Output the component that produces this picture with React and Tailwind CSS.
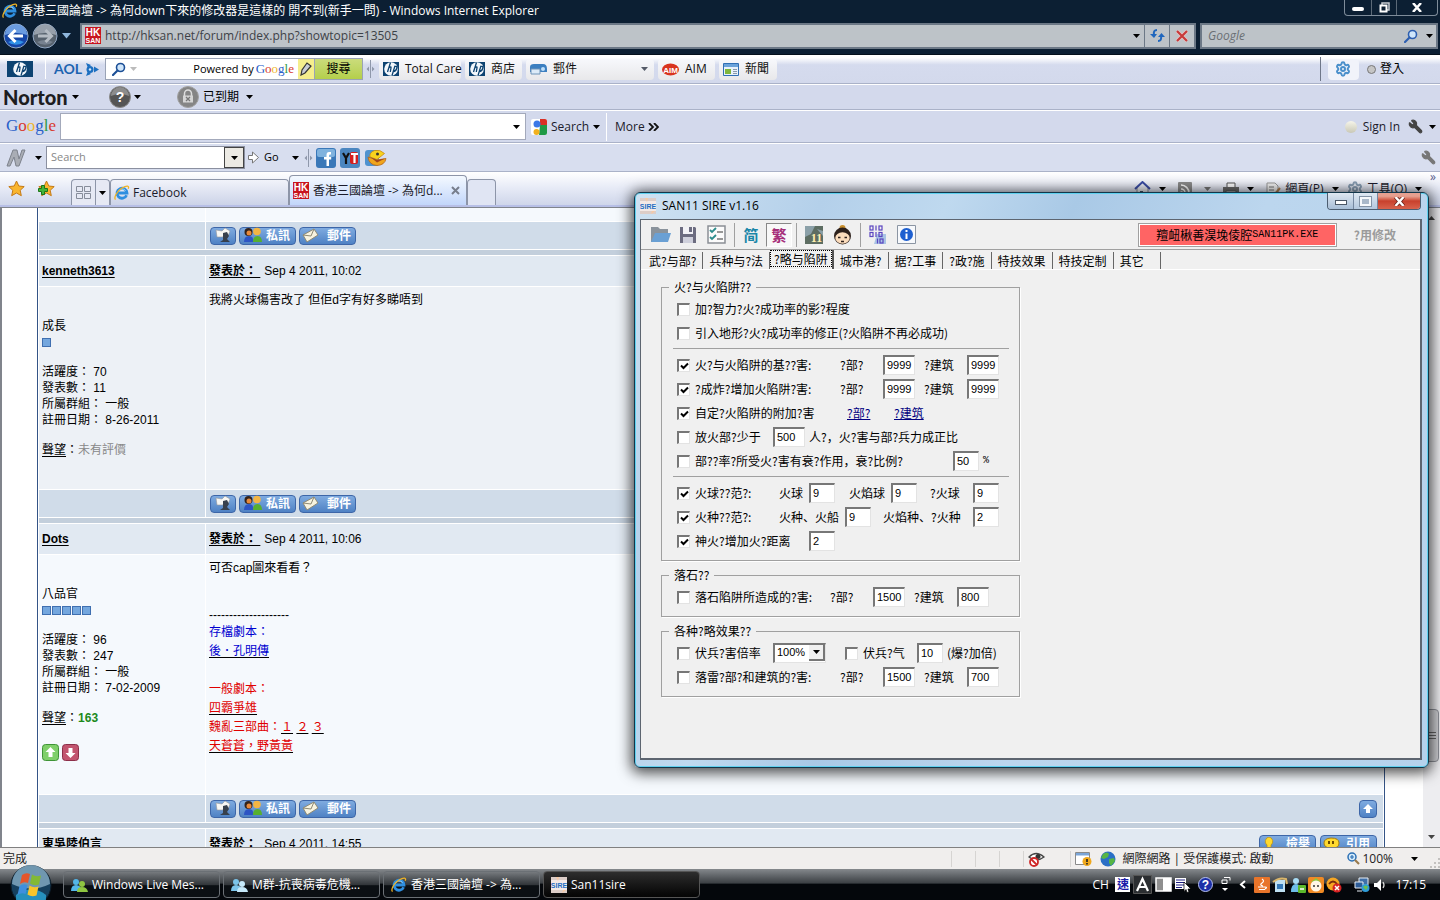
import React from 'react';
import { Wrench, Settings } from 'lucide-react';

/* ---------- small shared drawings ---------- */

const Caret = ({ className = 'text-black' }) => (
  <svg width="7" height="4" viewBox="0 0 7 4" className={`shrink-0 ${className}`}>
    <path d="M0 0h7L3.5 4z" fill="currentColor" />
  </svg>
);

const IeLogo = ({ size = 16 }) => (
  <svg width={size} height={size} viewBox="0 0 16 16" className="shrink-0">
    <path d="M12.6 10.2A5 5 0 1 1 13 8H4" fill="none" stroke="#2f8fe0" strokeWidth="2.8" />
    <path d="M4.2 6.6a4.3 4.3 0 0 1 7.4-1" fill="none" stroke="#9ad4fa" strokeWidth="1" />
    <path d="M1.6 14.6C-.6 12.8 3 6 8 3s7.6-2.4 6.2.8" fill="none" stroke="#f0b323" strokeWidth="1.3" />
  </svg>
);

const HkIcon = () => (
  <svg width="16" height="17" viewBox="0 0 16 17" className="shrink-0">
    <rect width="16" height="17" fill="#c8141e" />
    <g fill="#fff" fontFamily="Liberation Sans, sans-serif" fontWeight="bold" textAnchor="middle">
      <text x="8" y="8.5" fontSize="10">HK</text>
      <text x="8" y="16" fontSize="7">SAN</text>
    </g>
  </svg>
);

const HpIcon = ({ wide }) => (
  <svg width={wide ? 26 : 16} height={wide ? 16 : 14} viewBox={wide ? '0 0 26 16' : '5 1 16 14'} className="shrink-0">
    <rect width="26" height="16" fill="#0d4371" />
    <circle cx="13" cy="8" r="6.8" fill="#f4f8fc" />
    <path d="M12.5 1.5 9.5 11M11 6.5q2.500-1.500 2 .500L12.300 11M17 4.800 14 14.500M16.500 5.500q3-.800 2.200 2t-3.400 3" fill="none" stroke="#0d4371" strokeWidth="1.3" />
  </svg>
);

const SireIcon = () => (
  <svg width="16" height="16" viewBox="0 0 16 16" className="shrink-0">
    <rect width="16" height="16" fill="#f3e9e6" />
    <path d="M0 0h16v3H0zM0 13h16v3H0z" fill="#dccdc8" />
    <path d="M5 0h3l-1 4zM11 16l1-3h3z" fill="#f6c9a4" />
    <text x="8" y="10.5" fontSize="7" fontWeight="bold" textAnchor="middle" fill="#1d6fc4" fontFamily="Liberation Sans, sans-serif">SIRE</text>
  </svg>
);

const GoogleWord = ({ className }) => (
  <span className={`font-['Liberation_Serif',serif] ${className}`}>
    <span className="text-[#2a5fc9]">G</span>
    <span className="text-[#d8392f]">o</span>
    <span className="text-[#efb52b]">o</span>
    <span className="text-[#2a5fc9]">g</span>
    <span className="text-[#2f9a48]">l</span>
    <span className="text-[#d8392f]">e</span>
  </span>
);

const Magnifier = ({ color = '#2d5fb0' }) => (
  <svg width="14" height="14" viewBox="0 0 14 14" className="shrink-0">
    <circle cx="8.5" cy="5.5" r="4" fill="#cfe6fb" stroke={color} strokeWidth="1.6" />
    <path d="M5.5 8.5 1 13" stroke={color} strokeWidth="2.2" strokeLinecap="round" />
  </svg>
);

const Grip = () => (
  <svg width="9" height="20" viewBox="0 0 9 20" className="shrink-0">
    <path d="M4.5 1v18" stroke="#8f98ab" />
    <path d="M3 7.5v5L.5 10zM6 7.5v5L8.5 10z" fill="#8f98ab" />
  </svg>
);

const Divider = ({ className = 'h-5' }) => <span className={`w-px shrink-0 border-r border-white bg-[#a7b0c6] ${className}`} />;

/* ---------- browser frame ---------- */

function TitleBar() {
  return (
    <header className="flex h-[21px] shrink-0 items-center bg-[#0c1f33] pl-0.5">
      <IeLogo />
      <h1 className="ml-[3px] text-xs whitespace-nowrap text-white">香港三國論壇 -&gt; 為何down下來的修改器是這樣的 開不到(新手一問) - Windows Internet Explorer</h1>
      <div className="mr-0.5 ml-auto flex h-4 self-start rounded-b border border-t-0 border-[#7f8c9a]">
        <button aria-label="最小化" className="flex w-[26px] items-end justify-center pb-1">
          <span className="h-1 w-3 rounded-sm bg-white" />
        </button>
        <button aria-label="還原" className="flex w-[26px] items-center justify-center border-x border-[#5c6977]">
          <svg width="11" height="11" viewBox="0 0 11 11">
            <path d="M3 1h7v7H3z" fill="none" stroke="#c9ced4" strokeWidth="1.5" />
            <path d="M1.500 3.500h6v6h-6z" fill="#0c1f33" stroke="#fff" strokeWidth="2" />
          </svg>
        </button>
        <button aria-label="關閉" className="flex w-10 items-center justify-center">
          <svg width="10" height="9" viewBox="0 0 10 9">
            <path d="M1 0l8 9M9 0L1 9" stroke="#fff" strokeWidth="2.5" />
          </svg>
        </button>
      </div>
    </header>
  );
}

function NavButton({ forward }) {
  return (
    <button aria-label={forward ? '下一頁' : '上一頁'} className="shrink-0">
      <svg width="26" height="26" viewBox="0 0 26 26">
        <circle cx="13" cy="13" r="12" fill={forward ? '#57626e' : '#1546a8'} stroke="#93a9c6" />
        <path d="M2 12a11 11 0 0 1 22 0q-11-4-22 0z" fill={forward ? '#a7b0ba' : '#7fb0ee'} opacity=".8" />
        <path d="M5 19a11 9 0 0 0 16 0q-8-4-16 0z" fill={forward ? '#7f8b98' : '#37a4f6'} opacity=".8" />
        <path
          d={forward ? 'M6 13h13M13.500 7l6 6-6 6' : 'M20 13H7M12.500 7l-6 6 6 6'}
          fill="none"
          stroke={forward ? '#b4bbc3' : '#fff'}
          strokeWidth="3"
        />
      </svg>
    </button>
  );
}

function NavBar() {
  return (
    <nav className="flex h-[34px] shrink-0 items-center border-b border-[#05101c] bg-[#0c1f33] pr-0.5 pb-1 pl-[3px]">
      <NavButton />
      <span className="w-[3px]" />
      <NavButton forward />
      <span className="ml-1 text-[#8fb6dc]">
        <svg width="9" height="6" viewBox="0 0 9 6"><path d="M0 0h9L4.500 5.500z" fill="currentColor" /></svg>
      </span>
      <div className="ml-[9px] flex h-[26px] min-w-0 flex-1 items-center border-2 border-[#6c7886] bg-[#bdc3c8] pl-[3px]">
        <HkIcon />
        <input aria-label="網址" defaultValue="http://hksan.net/forum/index.php?showtopic=13505" className="ml-1 min-w-0 flex-1 bg-transparent text-xs text-[#3d4247] outline-none" />
        <Caret />
        <button aria-label="重新整理" className="ml-1 flex h-full w-[25px] items-center justify-center border-l border-[#6c7886]">
          <svg width="15" height="13" viewBox="0 0 15 13">
            <path d="M7 1q-4 0-3 5M8 12q4 0 3-5" fill="none" stroke="#1f66bd" strokeWidth="2" />
            <path d="M0 5h7L4 9zM8 8h7l-3.500-4z" fill="#1f66bd" />
          </svg>
        </button>
        <button aria-label="停止" className="flex h-full w-[25px] items-center justify-center border-l border-[#6c7886]">
          <svg width="12" height="12" viewBox="0 0 12 12">
            <path d="M1 1l10 10M11 1L1 11" stroke="#e8c8c8" strokeWidth="3.5" />
            <path d="M1 1l10 10M11 1L1 11" stroke="#c73a3a" strokeWidth="2.2" />
          </svg>
        </button>
      </div>
      <div className="ml-1 flex h-[26px] w-[238px] items-center border-2 border-[#6c7886] bg-[#bdc3c8] pr-[3px] pl-1.5">
        <input aria-label="搜尋" placeholder="Google" className="min-w-0 flex-1 bg-transparent text-xs italic outline-none placeholder:text-[#6a6f74]" />
        <Magnifier />
        <span className="w-2" />
        <Caret />
      </div>
    </nav>
  );
}

const chip = 'flex h-[21px] shrink-0 items-center rounded-sm bg-gradient-to-b from-[#f7f8fc] to-[#e8e8ea] pl-1 whitespace-nowrap text-[#111]';

function HpBar() {
  return (
    <div className="flex h-[29px] shrink-0 items-center border-b border-[#aab2c8] bg-gradient-to-b from-white from-10% via-[#d5dbee] via-35% to-[#d3d9ec] text-xs">
      <span className="ml-[7px]"><HpIcon wide /></span>
      <span className="w-3" />
      <Divider />
      <span className="ml-2 w-[31px] font-['Lato',sans-serif] text-[14px] font-bold text-[#1c63b0]">AOL</span>
      <svg width="14" height="13" viewBox="0 0 14 13" className="shrink-0">
        <circle cx="5" cy="6.5" r="3.5" fill="#1c6fc0" />
        <circle cx="5" cy="6.5" r="1.2" fill="#d3e6f8" />
        <path d="M1 0l5 2-3 3zM1 13l5-2-3-3zM9 3.500l5 3-5 3z" fill="#1c6fc0" />
      </svg>
      <div className="ml-1.5 flex h-[22px] w-[258px] shrink-0 border border-[#9aa3b6] bg-white">
        <div className="flex min-w-0 flex-1 items-center pl-1.5">
          <Magnifier color="#1c4f96" />
          <span className="w-1" />
          <Caret className="text-[#bbb]" />
          <input id="hpq" className="min-w-0 flex-1 outline-none" />
          <label htmlFor="hpq" className="mr-0.5 text-[11px] whitespace-nowrap text-black">Powered by</label>
          <GoogleWord className="text-[13px]" />
          <span className="ml-1 flex h-full w-4 items-center justify-center bg-[#f5ee8c]">
            <svg width="12" height="14" viewBox="0 0 12 14">
              <path d="M1 13l1-5 5-7 4 3-6 7z" fill="#c9cdd4" stroke="#333" strokeWidth="1.2" />
            </svg>
          </span>
        </div>
        <button className="w-12 border-l border-[#9aa3b6] bg-gradient-to-b from-[#cbdc7b] to-[#b4cf4a]">搜尋</button>
      </div>
      <span className="ml-[3px]"><Grip /></span>
      <div className="ml-1 flex gap-1">
        <button className={`${chip} w-[82px] gap-1.5`}><HpIcon />Total Care</button>
        <button className={`${chip} w-[57px] gap-1.5`}><HpIcon />商店</button>
        <button className={`${chip} w-[128px] gap-1.5 pr-1.5`}>
          <svg width="17" height="13" viewBox="0 0 17 13">
            <path d="M0 4q0-3 4-3h9q4 0 4 5v3H0z" fill="#3c7fc0" />
            <path d="M1 6h9v5H1z" fill="#dcebf8" stroke="#6f94b8" />
            <circle cx="13" cy="6" r="2" fill="#bfe0fa" />
          </svg>
          郵件
          <span className="ml-auto"><Caret className="text-[#555b68]" /></span>
        </button>
        <button className={`${chip} w-[57px] gap-1.5`}>
          <svg width="17" height="13" viewBox="0 0 17 13" className="shrink-0">
            <ellipse cx="8.5" cy="6.5" rx="8.5" ry="6" fill="#d9341f" />
            <text x="8.5" y="9.5" fontSize="8" fontWeight="bold" fill="#fff" textAnchor="middle" fontFamily="Liberation Sans, sans-serif">AIM</text>
          </svg>
          AIM
        </button>
        <button className={`${chip} w-[58px] gap-1.5`}>
          <svg width="16" height="13" viewBox="0 0 16 13">
            <path d="M.5.5h15v12H.5z" fill="#e8f2fb" stroke="#2f6fb4" />
            <path d="M1 1h14v3H1z" fill="#6ba3da" />
            <path d="M2 6h6v5H2z" fill="#7fb63c" />
            <path d="M10 6.5h4M10 8.5h4M10 10.5h4" stroke="#8a99aa" />
          </svg>
          新聞
        </button>
      </div>
      <span className="ml-auto h-6 w-px bg-[#6f7789]" />
      <button aria-label="設定" className="ml-[7px] flex h-[21px] w-[31px] items-center justify-center rounded-sm bg-[#f1f3fa]">
        <Settings size={16} strokeWidth={3} color="#4a8fcb" />
      </button>
      <span className="ml-2 h-[9px] w-[9px] rounded-full border border-[#777] bg-[#c5c5c5]" />
      <button className="mr-9 ml-1">登入</button>
    </div>
  );
}

function NortonBar() {
  return (
    <div className="flex h-[26px] shrink-0 items-center border-t border-b border-t-white border-b-[#aab2c8] bg-[#d3d9ec] text-xs">
      <span className="ml-[3px] w-[69px] font-['Lato',sans-serif] text-[20px] leading-6 font-black text-[#1d1d1f]">Norton</span>
      <Caret />
      <svg width="22" height="22" viewBox="0 0 22 22" className="ml-[30px]">
        <circle cx="11" cy="11" r="10.5" fill="#555" stroke="#8a8a8a" />
        <path d="M2 10a9 9 0 0 1 18 0q-9-4-18 0z" fill="#8c8c8c" />
        <text x="11" y="16" fontSize="14" fontWeight="bold" fill="#fff" textAnchor="middle" fontFamily="Liberation Sans, sans-serif">?</text>
      </svg>
      <span className="w-[3px]" />
      <Caret />
      <svg width="22" height="22" viewBox="0 0 22 22" className="ml-9">
        <circle cx="11" cy="11" r="10.5" fill="#858585" stroke="#a2a2a2" />
        <path d="M7.500 10V7.500a3.500 3.500 0 0 1 7 0V10" fill="none" stroke="#ddd" strokeWidth="1.5" />
        <path d="M6 9.500h10v7H6z" fill="#d5d5d5" />
        <path d="M9 11l4 4M13 11l-4 4" stroke="#777" strokeWidth="1.3" />
      </svg>
      <span className="mr-[7px] ml-1">已到期</span>
      <Caret />
    </div>
  );
}

function GoogleBar() {
  return (
    <div className="flex h-[33px] shrink-0 items-center border-t border-b border-t-white border-b-[#aab2c8] bg-[#d3d9ec] text-xs text-[#1b1b2b]">
      <GoogleWord className="ml-1.5 w-[54px] text-[17px]" />
      <div className="flex h-[27px] w-[466px] items-center border border-[#a3a9bb] bg-white pr-[5px]">
        <input aria-label="Google search" className="h-full min-w-0 flex-1 outline-none" />
        <Caret />
      </div>
      <button className="ml-[5px] flex items-center gap-1">
        <svg width="16" height="16" viewBox="0 0 16 16">
          <rect width="16" height="16" rx="2" fill="#fff" />
          <path d="M9 0h5a2 2 0 0 1 2 2v5H9z" fill="#d93025" />
          <path d="M9 6h7v8a2 2 0 0 1-2 2H8z" fill="#1f9a46" />
          <circle cx="6" cy="5" r="3.5" fill="#3b78e7" />
          <circle cx="5.5" cy="13" r="3" fill="#f2b01e" />
        </svg>
        Search
        <Caret />
      </button>
      <span className="w-1.5" />
      <Divider className="h-7" />
      <button className="ml-2 flex items-center gap-[3px]">
        More
        <svg width="11" height="8" viewBox="0 0 11 8">
          <path d="M1 0l4 4-4 4M6 0l4 4-4 4" fill="none" stroke="#111" strokeWidth="1.8" />
        </svg>
      </button>
      <span className="ml-auto h-3 w-3 rounded-full bg-gradient-to-b from-[#f6f5ea] to-[#c9c8b6]" />
      <button className="ml-1.5">Sign In</button>
      <Wrench size={15} fill="#444" color="#444" className="ml-2 -scale-x-100" />
      <span className="w-1.5" />
      <span className="mr-1"><Caret /></span>
    </div>
  );
}

function LinksBar() {
  return (
    <div className="flex h-[29px] shrink-0 items-center border-t border-b border-t-white border-b-[#aab2c8] bg-[#d8deef] text-[11px]">
      <svg width="20" height="18" viewBox="0 0 20 18" className="ml-1.5">
        <path d="M1 17L7 1h4l2 9 3-9h3l-6 16h-3L8 8 4 17z" fill="#a9adb5" stroke="#7d828c" />
      </svg>
      <span className="w-[9px]" />
      <Caret />
      <div className="ml-1 flex h-[23px] w-[199px] border border-[#8b90a0] bg-white">
        <input aria-label="Search" placeholder="Search" className="min-w-0 flex-1 pl-1 outline-none placeholder:text-[#888]" />
        <button aria-label="搜尋記錄" className="flex w-5 items-center justify-center border border-[#444] bg-[#eceae4]"><Caret /></button>
      </div>
      <svg width="11" height="13" viewBox="0 0 11 13" className="ml-[3px]">
        <path d="M.5 4.5h4V1l6 5.5-6 5.5V8.500h-4z" fill="#fff" stroke="#777" />
      </svg>
      <button className="ml-[5px] w-7 text-left">Go</button>
      <Caret />
      <span className="ml-[5px]"><Grip /></span>
      <svg width="20" height="20" viewBox="0 0 20 20" className="ml-[3px]">
        <rect width="20" height="20" rx="3" fill="#3a78b8" />
        <rect x="1" y="1" width="18" height="8" rx="2" fill="#7fb2de" />
        <path d="M15 4h-2q-2.500 0-2.500 3v2H8v2.500h2.500V18H13v-6.500h2.200V9H13V7.500q0-1 1-1h1z" fill="#fff" />
      </svg>
      <svg width="20" height="20" viewBox="0 0 20 20" className="ml-1">
        <rect width="20" height="20" rx="3" fill="#4b86c0" />
        <rect x="10" y="4" width="8" height="12" rx="2" fill="#d61f1f" />
        <path d="M3 5l3 5 3-5M6 10v6" fill="none" stroke="#111" strokeWidth="2.2" />
        <path d="M11 6h7M14.500 6v9" stroke="#fff" strokeWidth="2.2" />
      </svg>
      <svg width="22" height="20" viewBox="0 0 22 20" className="ml-[5px]">
        <rect y="2" width="14" height="16" rx="3" fill="#4f92cf" />
        <path d="M19.500 5.500Q15 1 9.500 2.500 4 4.500 5 9l7 2.500z" fill="#f8d21d" stroke="#c98a12" strokeWidth=".8" />
        <path d="M3 9l9 3 9-1.500Q20 17 12 17.500 4 17 3 9z" fill="#f0a51c" stroke="#b5651a" strokeWidth=".8" />
        <path d="M6 9.500l6 2.500 8-1.500-8 4z" fill="#a1461b" />
        <circle cx="12.500" cy="6" r="1.500" fill="#333" />
      </svg>
      <Wrench size={15} fill="#777" color="#777" className="mr-1 ml-auto -scale-x-100" />
    </div>
  );
}

const Star = ({ plus }) => (
  <svg width="17" height="17" viewBox="0 0 17 17" className="shrink-0">
    <path d="M8.500 1l2.300 5 5.400.600-4 3.700 1.100 5.400-4.800-2.700-4.800 2.700 1.100-5.400-4-3.700 5.400-.600z" fill="#f9b52e" stroke="#c57a17" />
    {plus && <path d="M3.500 5.500h3v3h3v3h-3v3h-3v-3h-3v-3h3z" fill="#43b538" stroke="#1d7418" />}
  </svg>
);

function TabBar() {
  return (
    <div className="flex h-[35px] shrink-0 items-end border-b-2 border-[#b7bfe6] bg-gradient-to-b from-white via-[#e6eaf6] to-[#cfd6ea] text-xs text-[#1b1b2b]">
      <button aria-label="我的最愛" className="mb-2 ml-2"><Star /></button>
      <button aria-label="新增至我的最愛" className="mb-2 ml-[13px]"><Star plus /></button>
      <div className="ml-4 flex h-[26px] rounded-t border border-b-0 border-[#8d95a8] bg-[#e6e9f4]">
        <button aria-label="快速索引標籤" className="flex w-[23px] items-center justify-center">
          <svg width="15" height="13" viewBox="0 0 15 13">
            <path d="M.5.5h6v5h-6zM8.5.5h6v5h-6zM.5 7.500h6v5h-6zM8.500 7.500h6v5h-6z" fill="none" stroke="#868c9a" />
          </svg>
        </button>
        <button aria-label="索引標籤清單" className="flex w-[14px] items-center justify-center border-l border-[#8d95a8]"><Caret /></button>
      </div>
      <button className="flex h-[26px] w-[179px] items-center gap-[3px] rounded-t border border-b-0 border-[#8d95a8] bg-gradient-to-b from-[#f1f3fa] to-[#ccd3e8] pl-[3px]">
        <IeLogo />Facebook
      </button>
      <div className="flex h-[30px] w-[178px] items-center rounded-t border border-b-0 border-[#8d95a8] bg-gradient-to-b from-[#f4f9ff] to-[#c2d6fa] pl-[3px]">
        <HkIcon />
        <span className="ml-1 whitespace-nowrap">香港三國論壇 -&gt; 為何d...</span>
        <button aria-label="關閉索引標籤" className="mr-1.5 ml-auto">
          <svg width="9" height="9" viewBox="0 0 9 9"><path d="M1 1l7 7M8 1L1 8" stroke="#777e8c" strokeWidth="2" /></svg>
        </button>
      </div>
      <button aria-label="新索引標籤" className="h-[26px] w-[29px] rounded-t border border-b-0 border-[#8d95a8] bg-[#e0e5f3]" />
      <div className="mr-5 mb-2 ml-auto flex items-center">
        <svg width="17" height="16" viewBox="0 0 17 16">
          <path d="M3 7v8h11V7" fill="#eef0f5" stroke="#8b8f99" />
          <path d="M1 8l7.500-7L16 8" fill="none" stroke="#3a4ca5" strokeWidth="2" />
          <path d="M6 10h3v5H6z" fill="#456" />
        </svg>
        <span className="mr-3 ml-2"><Caret /></span>
        <svg width="14" height="14" viewBox="0 0 14 14">
          <rect width="14" height="14" rx="1" fill="#8b8b8b" />
          <path d="M3 7a4 4 0 0 1 4 4M3 3a8 8 0 0 1 8 8" fill="none" stroke="#fff" strokeWidth="1.6" />
          <circle cx="3.5" cy="10.5" r="1.3" fill="#fff" />
        </svg>
        <span className="mr-3 ml-3"><Caret className="text-[#777]" /></span>
        <svg width="16" height="15" viewBox="0 0 16 15">
          <path d="M4 1h8v5H4z" fill="#fff" stroke="#555" />
          <path d="M0 5h16v7H0z" fill="#6a6a6a" />
          <path d="M3 9h10v5H3z" fill="#e5e5e5" stroke="#555" />
        </svg>
        <span className="mr-3 ml-2"><Caret /></span>
        <svg width="15" height="15" viewBox="0 0 15 15">
          <path d="M1 1h8l3 3v10H1z" fill="#f4f4f4" stroke="#999" />
          <path d="M3 5h5M3 8h5M3 11h5" stroke="#777" />
          <path d="M14 6l-5 6" stroke="#b08050" strokeWidth="2" />
        </svg>
        <button className="mr-2 ml-1">網頁(P)</button>
        <Caret />
        <Settings size={16} strokeWidth={3} color="#8a9fb5" className="ml-2" />
        <button className="mr-2 ml-1">工具(O)</button>
        <Caret />
      </div>
      <span className="mr-1 mb-5 -ml-3 text-[#555b8a]">»</span>
    </div>
  );
}

/* ---------- forum page ---------- */

const pill = "relative flex h-[18px] items-center rounded border border-[#3d66a8] bg-gradient-to-b from-[#7fabe0] to-[#4f82c4] font-['Liberation_Serif','Noto_Sans_CJK_TC',serif] text-xs leading-4 font-bold text-white";

function PostButtons({ top }) {
  return (
    <div className="grid grid-cols-[166px_1fr] gap-px">
      <div className="bg-[#d0dce9]" />
      <div className="flex h-[27px] items-center gap-[3px] bg-[#d0dce9] pr-1.5 pl-1">
        <button aria-label="個人檔案" className={`${pill} w-[26px] justify-center`}>
          <svg width="20" height="17" viewBox="0 0 20 17">
            <path d="M3 3l6 1 3-3 5 3-2 5-6 1-5 0z" fill="#f7f7f4" stroke="#999" strokeWidth=".6" />
            <path d="M10 6l4-1 2 4-2 3 3 3H7l3-2z" fill="#37404c" />
          </svg>
        </button>
        <button className={`${pill} w-[57px] pl-1`}>
          <svg width="18" height="17" viewBox="0 0 18 17">
            <path d="M0 15q0-6 5-6t4 6z" fill="#2d55c4" />
            <path d="M9 15q0-6 4.500-6t4.500 6z" fill="#57b02f" />
            <circle cx="4.5" cy="5" r="4" fill="#33231c" />
            <circle cx="5" cy="6" r="2.5" fill="#e88a3c" />
            <circle cx="13" cy="4.5" r="3.8" fill="#f3b544" />
          </svg>
          <span className="ml-1">私訊</span>
        </button>
        <button className={`${pill} w-[57px] pl-0.5`}>
          <svg width="17" height="16" viewBox="0 0 17 16">
            <path d="M1 7l11-6 4 6-11 7z" fill="#f7f3df" stroke="#8e8a74" />
            <path d="M1 7l8 1 3-7" fill="none" stroke="#8e8a74" />
          </svg>
          <span className="ml-2">郵件</span>
        </button>
        {top && (
          <button aria-label="回到頂部" className={`${pill} ml-auto w-[18px] justify-center`}>
            <svg width="10" height="10" viewBox="0 0 10 10"><path d="M5 0l5 5H7v4H3V5H0z" fill="#fff" /></svg>
          </button>
        )}
      </div>
    </div>
  );
}

function PostHeader({ name, time, actions }) {
  return (
    <>
      <div className="h-[5px] bg-[#c3cfdc]" />
      <div className="grid h-[30px] grid-cols-[166px_1fr] gap-px">
        <div className="flex items-center bg-[#e1e9f2] pl-[3px]">
          <a href="#user" className="font-bold underline underline-offset-2">{name}</a>
        </div>
        <div className="flex items-center bg-[#e1e9f2] pr-1.5 pl-[3px]">
          <a href="#post" className="font-bold whitespace-pre underline underline-offset-2">發表於： </a>
          <span className="ml-1">{time}</span>
          {actions && (
            <div className="ml-auto flex gap-1">
              <button className={`${pill} w-[57px] pl-1`}>
                <svg width="10" height="14" viewBox="0 0 10 14">
                  <path d="M5 0a4.500 4.500 0 0 1 2 8v3H3V8a4.500 4.500 0 0 1 2-8z" fill="#ffd92e" stroke="#b58a10" strokeWidth=".7" />
                </svg>
                <span className="ml-3">檢舉</span>
              </button>
              <button className={`${pill} w-[57px] pl-0.5`}>
                <svg width="17" height="14" viewBox="0 0 17 14">
                  <path d="M8 1q8 0 8 5t-6 5l-3 3v-3q-6-.500-6-5t7-5z" fill="#ffd92e" stroke="#a57e10" />
                  <path d="M6 4v3M10 4v3" stroke="#6b4a00" strokeWidth="2" />
                </svg>
                <span className="ml-1.5">引用</span>
              </button>
            </div>
          )}
        </div>
      </div>
    </>
  );
}

function UserInfo({ rank, pips, activity, posts, joined, children }) {
  return (
    <div className="pt-[31px] pl-[3px] leading-4">
      <div>{rank}</div>
      <div className="flex h-4 items-center gap-px">
        {Array.from({ length: pips }, (_, i) => (
          <span key={i} className="h-[9px] w-[9px] border border-[#3f6fb0] bg-[#74a7de]" />
        ))}
      </div>
      <div className="mt-3.5">活躍度： {activity}</div>
      <div>發表數： {posts}</div>
      <div>所屬群組： 一般</div>
      <div>註冊日期： {joined}</div>
      <div className="mt-3.5"><a href="#rep" className="underline underline-offset-2">聲望</a>：{children}</div>
    </div>
  );
}

const VoteButton = ({ up }) => (
  <button aria-label={up ? '加分' : '扣分'}>
    <svg width="17" height="17" viewBox="0 0 17 17">
      <rect x=".5" y=".5" width="16" height="16" rx="3" fill={up ? '#7fcf6a' : '#c2556f'} stroke={up ? '#3f9437' : '#8c2f49'} />
      <path d={up ? 'M8.500 3l5 5h-3v5h-4V8h-3z' : 'M8.500 14l5-5h-3V4h-4v5h-3z'} fill="#fff" />
    </svg>
  </button>
);

const sigLink = 'underline decoration-black underline-offset-2';

function ForumPage() {
  return (
    <main className="flex min-h-0 flex-1 overflow-hidden border-t border-l-2 border-[#80848c] bg-white font-['Liberation_Sans','Noto_Sans_CJK_TC',sans-serif] text-xs text-black">
      <div className="min-w-0 flex-1 pr-[38px] pl-[35px]">
        <div className="flex flex-col gap-px border-x border-[#345487] px-px">
          <div className="grid h-[13px] grid-cols-[166px_1fr] gap-px">
            <div className="bg-[#f5f9fd]" />
            <div className="bg-[#f5f9fd]" />
          </div>
          <PostButtons />

          <PostHeader name="kenneth3613" time="Sep 4 2011, 10:02" />
          <div className="grid h-[202px] grid-cols-[166px_1fr] gap-px">
            <div className="bg-[#edf1f6]">
              <UserInfo rank="成長" pips={1} activity="70" posts="11" joined="8-26-2011">
                <span className="text-[#888]">未有評價</span>
              </UserInfo>
            </div>
            <p className="bg-[#edf1f6] pt-[5px] pl-[3px] leading-4">我將火球傷害改了 但佢d字有好多睇唔到</p>
          </div>
          <PostButtons />

          <PostHeader name="Dots" time="Sep 4 2011, 10:06" />
          <div className="grid h-[239px] grid-cols-[166px_1fr] gap-px">
            <div className="bg-[#f5f9fd]">
              <UserInfo rank="八品官" pips={5} activity="96" posts="247" joined="7-02-2009">
                <b className="text-[#1c8a1c]">163</b>
              </UserInfo>
              <div className="mt-[18px] flex gap-[3px] pl-[3px]">
                <VoteButton up />
                <VoteButton />
              </div>
            </div>
            <div className="bg-[#f5f9fd] pt-[5px] pl-[3px] leading-4">
              <p>可否cap圖來看看？</p>
              <p className="mt-[31px]">--------------------</p>
              <div className="leading-[19px] text-[#0000d0]">
                <p>存檔劇本：</p>
                <p><a href="#s1" className={sigLink}>後．孔明傳</a></p>
              </div>
              <div className="mt-[19px] leading-[19px] text-[#e00000]">
                <p>一般劇本：</p>
                <p><a href="#s2" className={sigLink}>四霸爭雄</a></p>
                <p>
                  魏亂三部曲：<a href="#v1" className={sigLink}>１</a> <a href="#v2" className={sigLink}>２</a> <a href="#v3" className={sigLink}>３</a>
                </p>
                <p><a href="#s3" className={sigLink}>天蒼蒼，野黃黃</a></p>
              </div>
            </div>
          </div>
          <PostButtons top />

          <PostHeader name="東吳陸伯言" time="Sep 4 2011, 14:55" actions />
        </div>
      </div>
      <div className="flex w-[17px] shrink-0 flex-col items-center justify-between bg-[#ededf0] py-2">
        <svg width="7" height="4" viewBox="0 0 7 4"><path d="M0 4h7L3.500 0z" fill="#444" /></svg>
        <div className="mt-auto mb-[73px] flex h-[53px] w-[15px] flex-col items-center justify-center gap-0.5 rounded-sm border border-[#8e9098] bg-[#cfd0d4]">
          <span className="h-px w-2 bg-[#666]" />
          <span className="h-px w-2 bg-[#666]" />
          <span className="h-px w-2 bg-[#666]" />
        </div>
        <Caret className="text-[#444]" />
      </div>
    </main>
  );
}

/* ---------- SAN11 SIRE window ---------- */

function Tick({ id, checked, children }) {
  return (
    <div className="flex items-center gap-[5px]">
      <span className="relative flex h-[13px] w-[13px] shrink-0">
        <input
          id={id}
          type="checkbox"
          defaultChecked={checked}
          className="peer h-[13px] w-[13px] appearance-none border-t-2 border-r border-b border-l-2 border-t-[#777] border-r-[#e3e3e3] border-b-[#e3e3e3] border-l-[#777] bg-white"
        />
        <svg width="9" height="9" viewBox="0 0 9 9" className="pointer-events-none absolute top-[3px] left-[3px] hidden peer-checked:block">
          <path d="M1 3.500l2.500 2.500L8 1.500" fill="none" stroke="#000" strokeWidth="2" />
        </svg>
      </span>
      <label htmlFor={id} className="whitespace-nowrap">{children}</label>
    </div>
  );
}

const box = "h-5 border-t-2 border-r border-b border-l-2 border-t-[#777] border-r-[#e3e3e3] border-b-[#e3e3e3] border-l-[#777] bg-white pl-0.5 pb-0.5 font-['Liberation_Sans',sans-serif] text-[11px] outline-none";

const Num = ({ label, value, small }) => (
  <input aria-label={label} defaultValue={value} className={`${box} ${small ? 'w-[26px]' : 'w-8'}`} />
);

function Group({ title, children }) {
  return (
    <fieldset className="border border-[#a0a0a0] pr-2.5 pb-[7px] pl-[15px] shadow-[1px_1px_0_#fff]">
      <legend className="-ml-2 h-4 px-[5px] leading-4">{title}</legend>
      <div className="pt-0.5">{children}</div>
    </fieldset>
  );
}

const Rule = () => <hr className="mt-[3px] mb-1 -ml-1 border-[#a0a0a0]" />;

const damage = 'grid h-6 grid-cols-[163px_43px_41px_43px_32px] items-center';
const rocks = 'grid h-6 grid-cols-[153px_43px_41px_43px_32px] items-center';

const tabs = ['武?与部?', '兵种与?法', '?略与陷阱', '城市港?', '据?工事', '?政?施', '特技效果', '特技定制', '其它'];

function SireToolbar() {
  return (
    <div className="flex h-[30px] items-center border-b border-[#a0a0a0] pl-2.5">
      <button aria-label="打开">
        <svg width="20" height="17" viewBox="0 0 20 17">
          <path d="M0 1h7l2 2h8v13H0z" fill="#8a939c" />
          <path d="M4 7h16l-3 9H0z" fill="#6aa0d4" />
        </svg>
      </button>
      <button aria-label="保存" className="ml-2">
        <svg width="18" height="18" viewBox="0 0 18 18">
          <path d="M1 1h15l1 1v15H1z" fill="#6c6c80" />
          <path d="M4 1h10v7H4z" fill="#f2f2f6" />
          <path d="M4 11h10v6H4z" fill="#cfd0dc" />
          <path d="M10 1h3v5h-3z" fill="#6c6c80" />
        </svg>
      </button>
      <button aria-label="选项" className="ml-2.5">
        <svg width="19" height="19" viewBox="0 0 19 19">
          <path d="M1 1h17v17H1z" fill="#fbfbfb" stroke="#8a8f95" strokeWidth="1.5" />
          <path d="M3 5l2 2 4-4M3 12l2 2 4-4" fill="none" stroke="#2b8c8c" strokeWidth="1.8" />
          <path d="M10 7h6M10 14h6" stroke="#777" strokeWidth="1.5" />
        </svg>
      </button>
      <span className="mx-2 h-6 w-px bg-[#a0a0a0]" />
      <button className="w-4 text-[15px] font-bold text-[#1a86a8]">简</button>
      <button className="ml-[7px] h-6 w-[26px] border border-t-[#888] border-r-white border-b-white border-l-[#888] bg-[#f8f8f8] text-[15px] leading-5 font-bold text-[#a52d78]">繁</button>
      <span className="mr-2 ml-1 h-6 w-px bg-[#a0a0a0]" />
      <button aria-label="三国志11">
        <svg width="18" height="18" viewBox="0 0 18 18">
          <rect width="18" height="18" fill="#5d6d62" />
          <path d="M0 0h10l-4 8-6 3zM12 3l6 2v5z" fill="#8ba0a8" />
          <text x="11.5" y="16" fontSize="12" fontWeight="bold" fill="#ffefb0" textAnchor="middle" fontFamily="Liberation Serif, serif">11</text>
        </svg>
      </button>
      <button aria-label="武将" className="ml-2.5">
        <svg width="19" height="20" viewBox="0 0 19 20">
          <circle cx="9.5" cy="3" r="3" fill="#c98f2c" />
          <circle cx="9.5" cy="11" r="8.5" fill="#2e211c" />
          <ellipse cx="9.5" cy="13" rx="7.2" ry="5.8" fill="#fbdcbc" />
          <path d="M5 12.500h2.500M11.500 12.500H14M8 16.500h3" stroke="#2e211c" strokeWidth="1.6" />
        </svg>
      </button>
      <span className="mx-2 h-6 w-px bg-[#a0a0a0]" />
      <button aria-label="数据">
        <svg width="18" height="19" viewBox="0 0 18 19">
          <path d="M8 9h9v10H5z" fill="#a9c3e4" />
          <g fill="none" stroke="#5a44c0" strokeWidth="1.2">
            <rect x="1" y="1" width="3" height="4" />
            <path d="M7 .5v5" />
            <rect x="10" y="1" width="3" height="4" />
            <rect x="1" y="7.5" width="3" height="4" />
            <path d="M7 7v5" />
            <rect x="10" y="7.5" width="3" height="4" />
            <path d="M8.500 13.500v5" />
            <rect x="11" y="14" width="3" height="4" />
          </g>
        </svg>
      </button>
      <button aria-label="关于" className="ml-2.5">
        <svg width="19" height="19" viewBox="0 0 19 19">
          <path d="M.5.5h18v18H.5z" fill="#f7f9fc" stroke="#8b95a3" />
          <circle cx="9.5" cy="9.5" r="6.5" fill="#1d5fd0" />
          <path d="M9.500 5v2M9.500 8.500V14" stroke="#fff" strokeWidth="2" />
        </svg>
      </button>
      <div className="ml-auto flex h-6 w-[199px] items-center justify-center border border-[#a0a0a0] bg-[#ff6464] whitespace-nowrap ring-1 ring-white ring-inset">
        羶衄楸善淏堍倰腔<span className="font-['Liberation_Mono',monospace] text-[10px]">SAN11PK.EXE</span>
      </div>
      <button disabled className="mr-6 ml-[17px] font-bold text-[#9b9b9b]">?用修改</button>
    </div>
  );
}

function SireWindow() {
  return (
    <section className="absolute top-48 left-[634px] flex h-[576px] w-[795px] flex-col rounded-md border border-[#12364a] bg-[linear-gradient(115deg,#cfe2f2_0%,#b4d0ea_18%,#bfd9ef_30%,#a9c9e6_42%,#bcd6ee_60%,#b5d2ec_100%)] pr-1.5 pb-[7px] pl-[5px] shadow-[0_2px_14px_3px_rgba(0,0,0,0.7),inset_0_0_0_1px_#5fd0ee]">
      <div className="flex h-[26px] shrink-0 items-center">
        <SireIcon />
        <h2 className="ml-1.5 text-xs text-black">SAN11 SIRE v1.16</h2>
        <div className="mr-px ml-auto flex h-[17px] self-start overflow-hidden rounded-b border border-t-0 border-[#4c5d70]">
          <button aria-label="最小化" className="flex w-[25px] items-end justify-center bg-gradient-to-b from-[#dfe8f2] to-[#a8bed6] pb-1">
            <span className="h-[5px] w-3 border border-[#4b5766] bg-white" />
          </button>
          <button aria-label="最大化" className="flex w-[25px] items-center justify-center border-x border-[#7587a0] bg-gradient-to-b from-[#dfe8f2] to-[#b4c8de]">
            <span className="h-[9px] w-[11px] border-2 border-[#f5f8fb] bg-[#a9b8c9] outline outline-[#8393a6]" />
          </button>
          <button aria-label="关闭" className="flex w-[42px] items-center justify-center bg-gradient-to-b from-[#e6a090] from-20% via-[#c8402c] to-[#d8624c]">
            <svg width="11" height="9" viewBox="0 0 11 9">
              <path d="M1.500 0l8 9M9.500 0l-8 9" stroke="#6b241b" strokeWidth="4" />
              <path d="M1.500 0l8 9M9.500 0l-8 9" stroke="#fff" strokeWidth="2.4" />
            </svg>
          </button>
        </div>
      </div>

      <div className="flex min-h-0 flex-1 flex-col border border-r-2 border-b-2 border-[#5d6570] bg-[#f0f0f0] font-['Noto_Sans_CJK_SC',sans-serif] text-xs text-black">
        <SireToolbar />
        <div role="tablist" className="flex h-5 items-end border-b border-white">
          {tabs.map((name, i) => (
            <button
              key={name}
              role="tab"
              aria-selected={i === 2}
              className={`whitespace-nowrap ${i === 2
                ? 'h-[19px] border-r-2 border-[#555] pb-0.5'
                : 'h-[17px] border-r border-[#666] px-1.5 leading-4 first:pl-2 last:pr-4'}`}
            >
              {i === 2 ? <span className="block border border-dotted border-black px-[3px] leading-[15px]">{name}</span> : name}
            </button>
          ))}
        </div>

        <div className="flex w-[379px] flex-col gap-1.5 pt-[9px] pl-5">
          <Group title="火?与火陷阱??">
            <div className="flex h-6 items-center"><Tick id="c1">加?智力?火?成功率的影?程度</Tick></div>
            <div className="flex h-6 items-center"><Tick id="c2">引入地形?火?成功率的修正(?火陷阱不再必成功)</Tick></div>
            <Rule />
            <div className={damage}>
              <Tick id="c3" checked>火?与火陷阱的基??害:</Tick>
              <span>?部?</span><Num label="火部" value="9999" />
              <span>?建筑</span><Num label="火建筑" value="9999" />
            </div>
            <div className={damage}>
              <Tick id="c4" checked>?成炸?增加火陷阱?害:</Tick>
              <span>?部?</span><Num label="炸部" value="9999" />
              <span>?建筑</span><Num label="炸建筑" value="9999" />
            </div>
            <div className="grid h-6 grid-cols-[170px_47px_1fr] items-center">
              <Tick id="c5" checked>自定?火陷阱的附加?害</Tick>
              <a href="#army" className="text-[#000080] underline">?部?</a>
              <a href="#build" className="text-[#000080] underline">?建筑</a>
            </div>
            <div className="grid h-6 grid-cols-[96px_36px_1fr] items-center">
              <Tick id="c6">放火部?少于</Tick>
              <Num label="人数" value="500" />
              <span>人?，火?害与部?兵力成正比</span>
            </div>
            <div className="grid h-6 grid-cols-[276px_30px_1fr] items-center">
              <Tick id="c7">部??率?所受火?害有衰?作用，衰?比例?</Tick>
              <Num small label="比例" value="50" />
              <span className="font-['Liberation_Mono',monospace] text-[10px]">%</span>
            </div>
            <Rule />
            <div className="grid h-6 grid-cols-[102px_30px_40px_42px_39px_43px_26px] items-center">
              <Tick id="c8" checked>火球??范?:</Tick>
              <span>火球</span><Num small label="火球" value="9" />
              <span>火焰球</span><Num small label="火焰球" value="9" />
              <span>?火球</span><Num small label="?火球" value="9" />
            </div>
            <div className="grid h-6 grid-cols-[102px_66px_38px_90px_26px] items-center">
              <Tick id="c9" checked>火种??范?:</Tick>
              <span>火种、火船</span><Num small label="火种" value="9" />
              <span className="whitespace-nowrap">火焰种、?火种</span><Num small label="火焰种" value="2" />
            </div>
            <div className="grid h-6 grid-cols-[132px_26px] items-center">
              <Tick id="c10" checked>神火?增加火?距离</Tick>
              <Num small label="距离" value="2" />
            </div>
          </Group>

          <Group title="落石??">
            <div className={rocks}>
              <Tick id="c11">落石陷阱所造成的?害:</Tick>
              <span>?部?</span><Num label="落石部" value="1500" />
              <span>?建筑</span><Num label="落石建筑" value="800" />
            </div>
          </Group>

          <Group title="各种?略效果??">
            <div className="grid h-6 grid-cols-[96px_72px_72px_30px_1fr] items-center">
              <Tick id="c12">伏兵?害倍率</Tick>
              <span className="relative flex w-[53px]">
                <select aria-label="倍率" className={`${box} w-full appearance-none`} defaultValue="100%">
                  <option>100%</option>
                </select>
                <span className="pointer-events-none absolute top-0.5 right-px flex h-4 w-4 items-center justify-center border-r-2 border-b-2 border-[#777] bg-[#f0f0f0]"><Caret /></span>
              </span>
              <Tick id="c13">伏兵?气</Tick>
              <Num small label="气" value="10" />
              <span>(爆?加倍)</span>
            </div>
            <div className={damage}>
              <Tick id="c14">落雷?部?和建筑的?害:</Tick>
              <span>?部?</span><Num label="落雷部" value="1500" />
              <span>?建筑</span><Num label="落雷建筑" value="700" />
            </div>
          </Group>
        </div>
      </div>
    </section>
  );
}

/* ---------- bottom bars ---------- */

function StatusBar() {
  return (
    <footer className="flex h-[22px] shrink-0 items-center border-t border-[#808080] bg-[#f0eeed] text-xs text-[#222]">
      <span className="ml-[3px]">完成</span>
      <div className="ml-auto flex h-full items-center">
        <span className="h-4 w-6 border-l border-[#d6d4d2]" />
        <span className="h-4 w-6 border-l border-[#d6d4d2]" />
        <span className="h-4 w-6 border-l border-[#d6d4d2]" />
        <span className="flex w-12 border-x border-[#d6d4d2] pl-1">
          <svg width="17" height="16" viewBox="0 0 17 16">
            <path d="M1 6q7-7 15 0-8 6-15 0z" fill="#fff" stroke="#444" strokeWidth="1.3" />
            <circle cx="10" cy="5.5" r="2.5" fill="#333" />
            <circle cx="6" cy="11" r="4" fill="#fff" stroke="#cf2727" strokeWidth="1.8" />
            <path d="M3 8l6 6" stroke="#cf2727" strokeWidth="1.8" />
          </svg>
        </span>
        <svg width="17" height="16" viewBox="0 0 17 16" className="ml-1">
          <path d="M.5 1.500h14v12H.5z" fill="#fff" stroke="#8a8a8a" />
          <path d="M1 2h13v2.500H1z" fill="#7aa5d8" />
          <circle cx="12" cy="10.5" r="4.5" fill="#f0a81c" />
          <path d="M12 8v3M12 12v1.500" stroke="#222" strokeWidth="1.6" />
        </svg>
        <svg width="16" height="16" viewBox="0 0 16 16" className="ml-2">
          <circle cx="8" cy="8" r="7.5" fill="#2b6fc6" />
          <path d="M3 3q4-3 6 0l-1 3-4 2-3-1zM9 8l5-1 1 3-4 5-2-3z" fill="#57b544" />
        </svg>
        <span className="ml-1.5 w-[225px] whitespace-nowrap">網際網路 | 受保護模式: 啟動</span>
        <svg width="13" height="13" viewBox="0 0 13 13">
          <circle cx="5" cy="5" r="4" fill="#d5ebfb" stroke="#2b6fb4" strokeWidth="1.5" />
          <path d="M3 5h4M5 3v4" stroke="#2b6fb4" strokeWidth="1.2" />
          <path d="M8 8l4 4" stroke="#9a7a4c" strokeWidth="2.2" />
        </svg>
        <span className="mr-[18px] ml-0.5">100%</span>
        <Caret />
        <svg width="10" height="10" viewBox="0 0 10 10" className="mt-2 ml-3">
          <path d="M8 0h2v2H8zM4 4h2v2H4zM8 4h2v2H8zM0 8h2v2H0zM4 8h2v2H4zM8 8h2v2H8z" fill="#c3c1bf" />
        </svg>
      </div>
    </footer>
  );
}

const BuddyIcon = ({ a, b }) => (
  <svg width="17" height="16" viewBox="0 0 17 16" className="shrink-0">
    <circle cx="5" cy="5" r="3" fill={a} />
    <path d="M0 14q0-6 5-6t6 6z" fill={a} />
    <circle cx="11" cy="7" r="3" fill={b} />
    <path d="M6 15q0-5 5-5t6 5z" fill={b} />
  </svg>
);

function Task({ icon, label, active }) {
  return (
    <button
      className={`flex h-[27px] w-[157px] min-w-0 items-center gap-1 rounded-sm border px-[7px] whitespace-nowrap ${
        active
          ? 'border-[#555] bg-gradient-to-b from-[#2e2e2e] to-[#050505]'
          : 'border-[#6b7075] bg-gradient-to-b from-[#767a7e] via-[#33373b] via-50% to-[#0b0f13] to-55%'
      }`}
    >
      {icon}
      <span>{label}</span>
    </button>
  );
}

function Taskbar() {
  return (
    <div className="relative flex h-[31px] shrink-0 items-center bg-gradient-to-b from-[#85898d] via-[#3d4145] via-45% to-[#04070b] to-50% text-xs text-white">
      <button aria-label="開始" className="absolute -top-1 left-2.5">
        <svg width="42" height="35" viewBox="0 0 42 35">
          <circle cx="21" cy="20.5" r="20" fill="#16405e" stroke="#0c1b27" />
          <path d="M2 19a19 19 0 0 1 38 0q-19 9-38 0z" fill="#8fb4cc" opacity=".75" />
          <path d="M6 30a19 14 0 0 1 30 0v5H6z" fill="#2db2e6" opacity=".7" />
          <path d="M12 10q4-3 8-1l-2 9q-4-2-8 1z" fill="#e5552b" />
          <path d="M22 9.500q4 3 9 1l-2 9q-5 2-9-1z" fill="#82b935" />
          <path d="M9.500 21q4-3 8-1l-2 9q-4-2-8 1z" fill="#3f8fde" />
          <path d="M19.500 20.500q4 3 9 1l-2 9q-5 2-9-1z" fill="#f8c52a" />
        </svg>
      </button>
      <div className="ml-[63px] flex min-w-0 gap-[3px]">
        <Task icon={<BuddyIcon a="#53b6e8" b="#8fc641" />} label="Windows Live Mes..." />
        <Task icon={<BuddyIcon a="#7cc4ea" b="#c6e9fa" />} label="M群-抗喪病毒危機..." />
        <Task icon={<IeLogo />} label="香港三國論壇 -> 為..." />
        <Task icon={<SireIcon />} label="San11sire" active />
      </div>
      <div className="mr-3.5 ml-auto flex shrink-0 items-center">
        <span className="w-[23px]">CH</span>
        <span className="flex h-[15px] w-[15px] items-center justify-center bg-white font-bold text-[#1c1ca8]">速</span>
        <svg width="19" height="19" viewBox="0 0 19 19" className="ml-[3px]">
          <path d="M.5.5h18v18H.5z" fill="#2b2e31" stroke="#555" />
          <path d="M4 16L9.500 4 15 16M6 12h7" fill="none" stroke="#fff" strokeWidth="2.2" />
        </svg>
        <svg width="17" height="15" viewBox="0 0 17 15" className="ml-[3px]">
          <path d="M1 1h15v13H1z" fill="#8f8f8f" stroke="#fff" strokeWidth="1.5" />
          <path d="M8 1h8v13H8z" fill="#fff" />
        </svg>
        <svg width="17" height="16" viewBox="0 0 17 16" className="ml-[3px]">
          <path d="M0 1h11v11H0z" fill="#fff" />
          <path d="M1 3h9M1 5.500h9M1 8h9M1 10.500h6" stroke="#1c1c80" />
          <path d="M9 5l7 7h-3l1 3-2 .500-1-3-2 2z" fill="#fff" stroke="#000" strokeWidth=".7" />
        </svg>
        <svg width="15" height="15" viewBox="0 0 15 15" className="ml-1.5">
          <circle cx="7.5" cy="7.5" r="7" fill="#1c2fa8" stroke="#b9c2ee" />
          <text x="7.5" y="12" fontSize="12" fontWeight="bold" fill="#fff" textAnchor="middle" fontFamily="Liberation Sans, sans-serif">?</text>
        </svg>
        <svg width="10" height="17" viewBox="0 0 10 17" className="ml-2">
          <path d="M3 1.500h6v3M1 4h5v3.500H1z" fill="none" stroke="#fff" />
          <path d="M1 12h6l-3 3z" fill="#fff" />
        </svg>
        <svg width="7" height="9" viewBox="0 0 7 9" className="mx-2">
          <path d="M6 1L2 4.500 6 8" fill="none" stroke="#fff" strokeWidth="2" />
        </svg>
        <div className="flex gap-0.5">
          <svg width="16" height="16" viewBox="0 0 16 16">
            <rect width="16" height="16" rx="1" fill="#e8742a" />
            <path d="M8 2q3 2 0 4t1 3M4 10h7M5 12.500h6M11 10q3 0 0 2" fill="none" stroke="#fff" strokeWidth="1.2" />
          </svg>
          <svg width="16" height="16" viewBox="0 0 16 16">
            <path d="M3 3h10v12H3z" fill="#bfe0f2" />
            <path d="M5 7h6v5H5z" fill="#3478b8" />
            <path d="M1 5q6-5 13-3l1 5" fill="none" stroke="#d9b56a" strokeWidth="2" />
          </svg>
          <svg width="16" height="16" viewBox="0 0 16 16">
            <circle cx="6" cy="4" r="3" fill="#a8dcf5" />
            <path d="M1 15q0-8 5-8t5 8z" fill="#6dbde8" />
            <rect x="8" y="8" width="8" height="8" rx="1" fill="#5cb82c" />
            <path d="M10 12h4" stroke="#fff" strokeWidth="1.5" />
          </svg>
          <svg width="16" height="16" viewBox="0 0 16 16">
            <rect width="16" height="16" rx="2" fill="#f08a24" />
            <path d="M3 5l5-4 5 4z" fill="#8cc63f" />
            <circle cx="8" cy="9" r="5.5" fill="#fff6e6" />
            <path d="M6 8v2M10 8v2" stroke="#333" strokeWidth="1.5" />
          </svg>
          <svg width="16" height="16" viewBox="0 0 16 16">
            <circle cx="7" cy="7" r="6.5" fill="#f5a623" />
            <path d="M3 7q4-5 8 0" fill="none" stroke="#7a2c0c" strokeWidth="1.8" />
            <circle cx="11" cy="11" r="4.5" fill="#d62222" />
            <path d="M9 9l4 4M13 9l-4 4" stroke="#fff" strokeWidth="1.5" />
          </svg>
        </div>
        <svg width="16" height="16" viewBox="0 0 16 16" className="ml-3">
          <path d="M5 1h9v7H5z" fill="#3e6fa8" stroke="#e8eef5" />
          <path d="M1 5h8v6H1zM3 14h5" fill="#2c5c98" stroke="#e8eef5" />
          <circle cx="11.5" cy="11" r="4" fill="#2f9cd8" />
          <path d="M9 10q3-3 5 0l-2 3z" fill="#6cc04a" />
        </svg>
        <svg width="13" height="14" viewBox="0 0 13 14" className="mr-2 ml-1">
          <path d="M0 5h3l4-4v12L3 9H0z" fill="#fff" />
          <path d="M9 4q2 3 0 6" fill="none" stroke="#ddd" strokeWidth="1.3" />
        </svg>
        <time>17:15</time>
      </div>
    </div>
  );
}

export default function App() {
  return (
    <div className="relative flex h-screen flex-col overflow-hidden bg-[#0c1f33] font-['Open_Sans','Noto_Sans_CJK_TC',sans-serif]">
      <TitleBar />
      <NavBar />
      <HpBar />
      <NortonBar />
      <GoogleBar />
      <LinksBar />
      <TabBar />
      <ForumPage />
      <StatusBar />
      <Taskbar />
      <SireWindow />
    </div>
  );
}
